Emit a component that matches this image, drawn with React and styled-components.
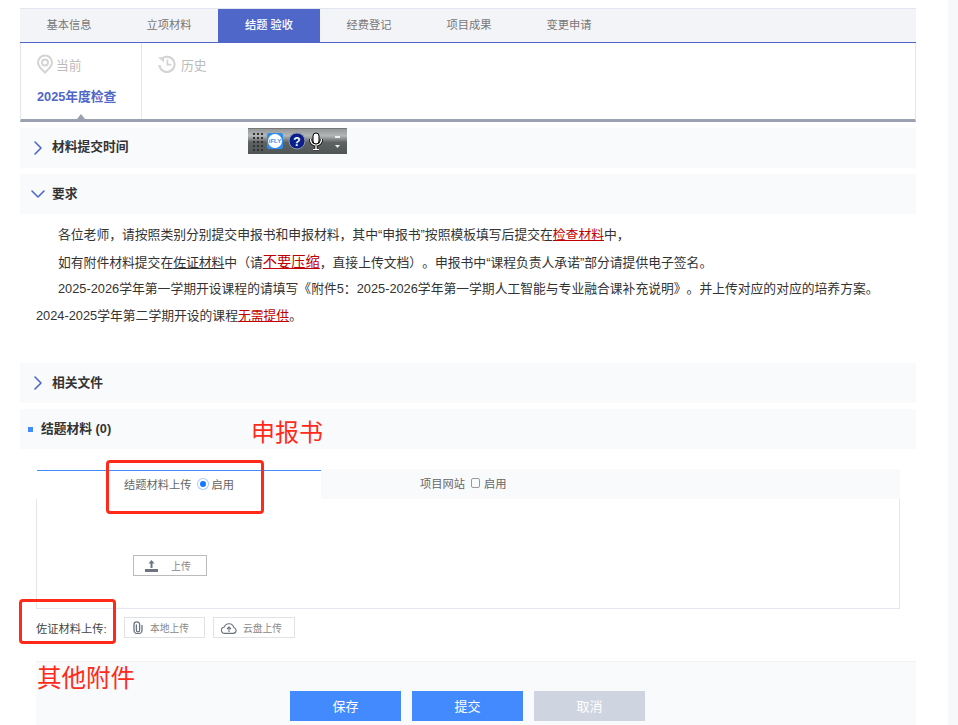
import React from "react";
import styled, { createGlobalStyle } from "styled-components";
import { ChevronRight, ChevronDown } from "lucide-react";

const tabs = ["基本信息", "立项材料", "结题 验收", "经费登记", "项目成果", "变更申请"];

const GlobalStyle = createGlobalStyle`
  html, body {
    margin: 0;
    height: 100%;
    overflow: hidden;
    background: #fff;
  }
  body {
    font-family: "Liberation Sans", "Noto Sans CJK SC", sans-serif;
    font-size: 12px;
    color: #333;
    text-spacing-trim: space-all;
  }
`;

const Page = styled.div`
  position: relative;
  display: flex;
  justify-content: space-between;
  width: 958px;
  height: 725px;
  overflow: hidden;
`;

const Main = styled.main`
  width: 896px;
  margin-left: 20px;
  padding-top: 8px;
`;

const ScrollStrip = styled.div`
  width: 10px;
  background: #f7f8fa;
`;

const TabBar = styled.nav`
  display: flex;
  height: 33px;
  background: #f3f4f8;
  border-top: 1px solid #e3e6f0;
  border-bottom: 1px solid #4f67c9;
`;

const Tab = styled.div`
  flex: none;
  width: ${({ $active }) => ($active ? "102px" : "100px")};
  margin: ${({ $active }) => ($active ? "0 -1px" : "0")};
  line-height: 33px;
  text-align: center;
  font-size: 11.25px;
  color: ${({ $active }) => ($active ? "#fff" : "#777")};
  background: ${({ $active }) => ($active ? "#4f67c9" : "transparent")};
  font-weight: ${({ $active }) => ($active ? 500 : 400)};

  &:first-child {
    margin-left: -1px;
  }
`;

const YearPanel = styled.div`
  display: flex;
  height: 76px;
  border-left: 1px solid #e3e6f0;
  border-right: 1px solid #e3e6f0;
  border-bottom: 3px solid #9ba1b0;
`;

const CurrentColumn = styled.div`
  position: relative;
  box-sizing: border-box;
  width: 121px;
  padding: 12px 0 0 16px;
  border-right: 1px solid #e3e6f0;
`;

const HistoryColumn = styled.div`
  padding: 12px 0 0 15px;
`;

const ColumnTitle = styled.div`
  display: flex;
  align-items: center;
  gap: ${({ $gap }) => $gap}px;
  height: 18px;
  margin-left: ${({ $shift }) => $shift || 0}px;
  font-size: 12.75px;
  color: #bbb;
`;

const YearLink = styled.div`
  margin-top: 15px;
  font-size: 12.75px;
  font-weight: 700;
  line-height: 18px;
  color: #4f67c9;
  white-space: nowrap;
`;

const Caret = styled.span`
  position: absolute;
  left: 56px;
  bottom: 0;
  border-left: 4px solid transparent;
  border-right: 4px solid transparent;
  border-bottom: 5px solid #9ba1b0;
`;

const SectionBar = styled.div`
  display: flex;
  align-items: center;
  height: 40px;
  margin-top: ${({ $top }) => $top}px;
  padding-left: 6px;
  background: #f9fafc;
  font-size: 12.75px;
  font-weight: 700;
  color: #333;

  svg {
    flex: none;
    color: #4f67c9;
  }
`;

const SectionTitle = styled.span`
  margin-left: 2px;
  margin-bottom: ${({ $lift }) => $lift}px;
`;

const Requirements = styled.div`
  padding: 8px 0 0 16px;
  height: 149px;
  box-sizing: border-box;
  font-size: 12.8px;
  line-height: 26.7px;
  color: #333;
`;

const Line = styled.p`
  margin: 0;
  text-indent: ${({ $flush }) => ($flush ? 0 : "22px")};
  white-space: nowrap;
`;

const Under = styled.span`
  text-decoration: underline;
  font-size: ${({ $big }) => ($big ? "14.25px" : "inherit")};
  color: ${({ $red }) => ($red ? "#c00000" : "inherit")};
`;

const MaterialBar = styled.div`
  display: flex;
  align-items: center;
  gap: 8px;
  height: 40px;
  margin-top: 6px;
  padding-left: 8px;
  background: #f9fafc;
  font-size: 12.75px;
  font-weight: 700;
  color: #333;
`;

const MaterialTitle = styled.span`
  margin-bottom: 3px;
`;

const Square = styled.span`
  width: 5px;
  height: 5px;
  background: #448aff;
`;

const UploadBox = styled.section`
  width: 864px;
  margin: 20px 0 0 16px;
`;

const BoxTabs = styled.div`
  display: flex;
  height: 30px;
`;

const BoxTab = styled.div`
  display: flex;
  align-items: center;
  gap: 6px;
  box-sizing: border-box;
  flex: ${({ $active }) => ($active ? "0 0 284px" : "1")};
  padding: ${({ $active }) => ($active ? "0 0 3px 87px" : "0 0 3px 99px")};
  margin: ${({ $active }) => ($active ? "1px 0 0 1px" : 0)};
  border-top: ${({ $active }) => ($active ? "1px solid #448aff" : "none")};
  background: ${({ $active }) => ($active ? "#fff" : "#f9fafc")};
  font-size: 11.25px;
  color: #666;
`;

const Enable = styled.span`
  display: flex;
  align-items: center;
  gap: 4px;
`;

const Radio = styled.span`
  box-sizing: border-box;
  width: 10px;
  height: 10px;
  border-radius: 50%;
  background: #1677ff;
  border: 2px solid #fff;
  box-shadow: 0 0 0 1px #a9ccf7;
`;

const Check = styled.span`
  box-sizing: border-box;
  width: 9px;
  height: 10px;
  border: 1px solid #999;
  border-radius: 2px;
`;

const BoxBody = styled.div`
  height: 110px;
  box-sizing: border-box;
  padding: 56px 0 0 96px;
  border-left: 1px solid #e3e6f0;
  border-right: 1px solid #e3e6f0;
  border-bottom: 1px solid #e3e6f0;
`;

const UploadButton = styled.div`
  display: flex;
  align-items: center;
  box-sizing: border-box;
  width: 74px;
  height: 21px;
  padding-left: 11px;
  gap: 13px;
  border: 1px solid #bbb;
  font-size: 10px;
  color: #888;
`;

const AttachRow = styled.div`
  display: flex;
  align-items: center;
  height: 21px;
  margin: 8px 0 0 16px;
`;

const AttachLabel = styled.span`
  width: 88px;
  font-size: 11.25px;
  color: #444;
  white-space: nowrap;
`;

const AttachButton = styled.div`
  display: flex;
  align-items: center;
  box-sizing: border-box;
  gap: 6px;
  width: ${({ $wide }) => ($wide ? "82px" : "81px")};
  height: 21px;
  margin-right: 8px;
  padding-left: 7px;
  border: 1px solid #e0e2e6;
  font-size: 9.75px;
  color: #888;
`;

const Footer = styled.footer`
  display: flex;
  gap: 11px;
  height: 64px;
  box-sizing: border-box;
  margin: 23px 0 0 16px;
  padding: 29px 0 0 254px;
  background: #f9fafc;
  border-top: 1px solid #f0f1f3;
`;

const ActionButton = styled.div`
  width: 111px;
  height: 30px;
  line-height: 31px;
  text-align: center;
  font-size: 13px;
  color: #fff;
  background: ${({ $disabled }) => ($disabled ? "#cfd5e0" : "#448aff")};
`;

const VoiceBar = styled.div`
  position: absolute;
  left: 248px;
  top: 128px;
  width: 99px;
  height: 26px;
`;

const Annotation = styled.div`
  position: absolute;
  left: ${({ $x }) => $x}px;
  top: ${({ $y }) => $y}px;
  font-size: ${({ $size }) => $size}px;
  line-height: 30px;
  color: #ff2a1a;
`;

const RedFrame = styled.div`
  position: absolute;
  box-sizing: border-box;
  left: ${({ $x }) => $x}px;
  top: ${({ $y }) => $y}px;
  width: ${({ $w }) => $w}px;
  height: ${({ $h }) => $h}px;
  border: 3px solid #ff2a1a;
  border-radius: 4px;
`;

const PinIcon = () => (
  <svg width="18" height="20" viewBox="0 0 18 20" fill="none" stroke="#d4d4d4" strokeWidth="2">
    <path d="M9 18.6 C6 15.6 2 12.4 2 8.4 A7 7 0 0 1 16 8.4 C16 12.4 12 15.6 9 18.6 Z" />
    <circle cx="9" cy="8.4" r="3" />
  </svg>
);

const HistoryIcon = () => (
  <svg width="20" height="20" viewBox="0 0 20 20" fill="none" stroke="#d4d4d4" strokeWidth="2.2">
    <path d="M5 4.6 A7.6 7.6 0 1 1 2.4 11" />
    <path d="M1 3.2 H7 V8.4 Z" fill="#d4d4d4" stroke="none" />
    <path d="M10.4 5.6 V10.6 H14.4" strokeWidth="1.8" />
  </svg>
);

const UploadGlyph = () => (
  <svg width="13" height="12" viewBox="0 0 13 12" fill="#6f7480">
    <path d="M6.5 0 L9.5 3.6 H7.5 V8 H5.5 V3.6 H3.5 Z" />
    <path d="M0 9 H13 V12 H0 Z" />
  </svg>
);

const ClipGlyph = () => (
  <svg width="12" height="13" viewBox="0 0 12 13" fill="none" stroke="#6b7280" strokeWidth="1.3" strokeLinecap="round">
    <path d="M4.4 4 V9.2 A1.6 1.6 0 0 0 7.6 9.2 V3.2 A2.8 2.4 0 0 0 2 3.2 V9.4 A4 3.2 0 0 0 10 9.4 V4.4" />
  </svg>
);

const CloudGlyph = () => (
  <svg width="16" height="12" viewBox="0 0 16 12" fill="none" stroke="#6b7280" strokeWidth="1.1">
    <path d="M4 11.4 H12.4 A3 3 0 0 0 12.8 5.5 A5 5 0 0 0 3.3 5 A3.2 3.2 0 0 0 4 11.4 Z" />
    <path d="M8 10 V5 M6 7 L8 5 L10 7" />
  </svg>
);

const VoiceGraphic = () => (
  <svg width="99" height="26" viewBox="0 0 99 26">
    <defs>
      <linearGradient id="voiceBg" x1="0" y1="0" x2="0" y2="1">
        <stop offset="0" stopColor="#8f9394" />
        <stop offset="0.3" stopColor="#b4b7b7" />
        <stop offset="0.55" stopColor="#5d6263" />
        <stop offset="1" stopColor="#505556" />
      </linearGradient>
    </defs>
    <rect width="99" height="26" fill="url(#voiceBg)" />
    <rect width="99" height="1" fill="#777" />
    {[5, 9, 13].map((x) =>
      [5, 9, 13, 17, 21].map((y) => <rect key={`${x}-${y}`} x={x} y={y} width="2" height="2" fill="#333" />)
    )}
    <rect x="19" y="5" width="16" height="16" rx="2" fill="#2f8df0" />
    <circle cx="27" cy="13" r="7" fill="#fff" />
    <text x="27" y="15" fontSize="6" fontWeight="700" textAnchor="middle" fill="#2f8df0" fontFamily="Liberation Sans">iFLY</text>
    <circle cx="49" cy="13" r="8" fill="#0a1e8c" stroke="#8c97a8" strokeWidth="1" />
    <text x="49" y="17.5" fontSize="12" fontWeight="700" textAnchor="middle" fill="#fff" fontFamily="Liberation Sans">?</text>
    <path d="M62.5 11 C62.5 19 73.5 19 73.5 11 M68 18 V21 M65 21.5 H71" fill="none" stroke="#000" strokeWidth="3" />
    <path d="M62.5 11 C62.5 19 73.5 19 73.5 11 M68 18 V21 M65 21.5 H71" fill="none" stroke="#fff" strokeWidth="1.4" />
    <rect x="65" y="5" width="6" height="11" rx="3" fill="#fff" stroke="#000" />
    <rect x="87" y="8" width="5" height="2" fill="#eee" />
    <path d="M87 17 H92 L89.5 20 Z" fill="#eee" />
  </svg>
);

export default function App() {
  return (
    <Page>
      <GlobalStyle />
      <Main>
        <TabBar>
          {tabs.map((t, i) => (
            <Tab key={t} $active={i === 2}>{t}</Tab>
          ))}
        </TabBar>
        <YearPanel>
          <CurrentColumn>
            <ColumnTitle $gap={2} $shift={-1}><PinIcon />当前</ColumnTitle>
            <YearLink>2025年度检查</YearLink>
            <Caret />
          </CurrentColumn>
          <HistoryColumn>
            <ColumnTitle $gap={4}><HistoryIcon />历史</ColumnTitle>
          </HistoryColumn>
        </YearPanel>
        <SectionBar $top={6}>
          <ChevronRight size={24} strokeWidth={1.6} />
          <SectionTitle $lift={5}>材料提交时间</SectionTitle>
        </SectionBar>
        <SectionBar $top={6}>
          <ChevronDown size={24} strokeWidth={1.6} />
          <SectionTitle $lift={4}>要求</SectionTitle>
        </SectionBar>
        <Requirements>
          <Line>各位老师，请按照类别分别提交申报书和申报材料，其中“申报书”按照模板填写后提交在<Under $red>检查材料</Under>中，</Line>
          <Line>如有附件材料提交在<Under>佐证材料</Under>中（请<Under $red $big>不要压缩</Under>，直接上传文档）。申报书中“课程负责人承诺”部分请提供电子签名。</Line>
          <Line>2025-2026学年第一学期开设课程的请填写《附件5：2025-2026学年第一学期人工智能与专业融合课补充说明》。并上传对应的对应的培养方案。</Line>
          <Line $flush>2024-2025学年第二学期开设的课程<Under $red>无需提供</Under>。</Line>
        </Requirements>
        <SectionBar $top={0}>
          <ChevronRight size={24} strokeWidth={1.6} />
          <SectionTitle $lift={3}>相关文件</SectionTitle>
        </SectionBar>
        <MaterialBar>
          <Square />
          <MaterialTitle>结题材料 (0)</MaterialTitle>
        </MaterialBar>
        <UploadBox>
          <BoxTabs>
            <BoxTab $active>
              结题材料上传
              <Enable><Radio />启用</Enable>
            </BoxTab>
            <BoxTab>
              项目网站
              <Enable><Check />启用</Enable>
            </BoxTab>
          </BoxTabs>
          <BoxBody>
            <UploadButton><UploadGlyph />上传</UploadButton>
          </BoxBody>
        </UploadBox>
        <AttachRow>
          <AttachLabel>佐证材料上传:</AttachLabel>
          <AttachButton><ClipGlyph />本地上传</AttachButton>
          <AttachButton $wide><CloudGlyph />云盘上传</AttachButton>
        </AttachRow>
        <Footer>
          <ActionButton>保存</ActionButton>
          <ActionButton>提交</ActionButton>
          <ActionButton $disabled>取消</ActionButton>
        </Footer>
      </Main>
      <ScrollStrip />
      <VoiceBar><VoiceGraphic /></VoiceBar>
      <Annotation $x={251} $y={418} $size={24}>申报书</Annotation>
      <Annotation $x={37} $y={664} $size={24.5}>其他附件</Annotation>
      <RedFrame $x={106} $y={460} $w={158} $h={54} />
      <RedFrame $x={19} $y={599} $w={97} $h={45} />
    </Page>
  );
}
